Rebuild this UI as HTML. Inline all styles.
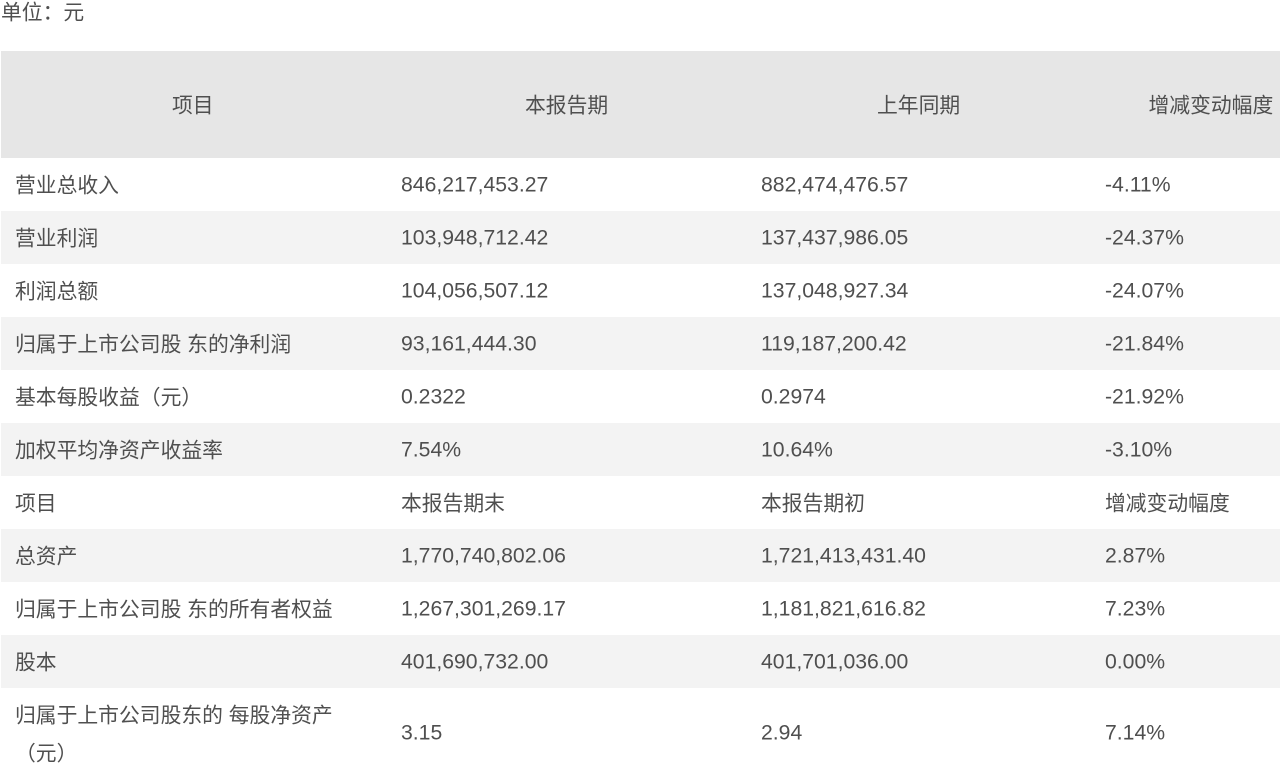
<!DOCTYPE html>
<html lang="zh-CN">
<head>
<meta charset="utf-8">
<title>单位:元</title>
<style>
html,body{margin:0;padding:0;background:#fff;width:1280px;height:775px;overflow:hidden}
body{position:relative;font-family:"Liberation Sans","Noto Sans CJK SC",sans-serif;font-size:20.8px;color:#4f4f4f}
.b{position:absolute;left:1px;width:1279px}
.t{position:absolute;white-space:nowrap;line-height:28px;transform:translateY(-12.5px);filter:blur(.25px)}
.n{font-size:21.2px;transform:translateY(-13.5px)}
</style>
</head>
<body>
<div class="b" style="top:51px;height:107px;background:#e6e6e6"></div>
<div class="b" style="top:211px;height:53px;background:#f3f3f3"></div>
<div class="b" style="top:317px;height:53px;background:#f3f3f3"></div>
<div class="b" style="top:423px;height:53px;background:#f3f3f3"></div>
<div class="b" style="top:529px;height:53px;background:#f3f3f3"></div>
<div class="b" style="top:635px;height:53px;background:#f3f3f3"></div>

<div class="t" style="left:1px;top:12px">单位&#xFF1A;元</div>

<div class="t" style="left:172px;top:105px">项目</div>
<div class="t" style="left:525px;top:105px">本报告期</div>
<div class="t" style="left:877px;top:105px">上年同期</div>
<div class="t" style="left:1148.5px;top:105px">增减变动幅度</div>

<div class="t" style="left:15px;top:185px">营业总收入</div>
<div class="t n" style="left:401px;top:185px">846,217,453.27</div>
<div class="t n" style="left:761px;top:185px">882,474,476.57</div>
<div class="t n" style="left:1105px;top:185px">-4.11%</div>

<div class="t" style="left:15px;top:238px">营业利润</div>
<div class="t n" style="left:401px;top:238px">103,948,712.42</div>
<div class="t n" style="left:761px;top:238px">137,437,986.05</div>
<div class="t n" style="left:1105px;top:238px">-24.37%</div>

<div class="t" style="left:15px;top:291px">利润总额</div>
<div class="t n" style="left:401px;top:291px">104,056,507.12</div>
<div class="t n" style="left:761px;top:291px">137,048,927.34</div>
<div class="t n" style="left:1105px;top:291px">-24.07%</div>

<div class="t" style="left:15px;top:344px">归属于上市公司股 东的净利润</div>
<div class="t n" style="left:401px;top:344px">93,161,444.30</div>
<div class="t n" style="left:761px;top:344px">119,187,200.42</div>
<div class="t n" style="left:1105px;top:344px">-21.84%</div>

<div class="t" style="left:15px;top:397px">基本每股收益&#xFF08;元&#xFF09;</div>
<div class="t n" style="left:401px;top:397px">0.2322</div>
<div class="t n" style="left:761px;top:397px">0.2974</div>
<div class="t n" style="left:1105px;top:397px">-21.92%</div>

<div class="t" style="left:15px;top:450px">加权平均净资产收益率</div>
<div class="t n" style="left:401px;top:450px">7.54%</div>
<div class="t n" style="left:761px;top:450px">10.64%</div>
<div class="t n" style="left:1105px;top:450px">-3.10%</div>

<div class="t" style="left:15px;top:503px">项目</div>
<div class="t" style="left:401px;top:503px">本报告期末</div>
<div class="t" style="left:761px;top:503px">本报告期初</div>
<div class="t" style="left:1105px;top:503px">增减变动幅度</div>

<div class="t" style="left:15px;top:556px">总资产</div>
<div class="t n" style="left:401px;top:556px">1,770,740,802.06</div>
<div class="t n" style="left:761px;top:556px">1,721,413,431.40</div>
<div class="t n" style="left:1105px;top:556px">2.87%</div>

<div class="t" style="left:15px;top:609px">归属于上市公司股 东的所有者权益</div>
<div class="t n" style="left:401px;top:609px">1,267,301,269.17</div>
<div class="t n" style="left:761px;top:609px">1,181,821,616.82</div>
<div class="t n" style="left:1105px;top:609px">7.23%</div>

<div class="t" style="left:15px;top:662px">股本</div>
<div class="t n" style="left:401px;top:662px">401,690,732.00</div>
<div class="t n" style="left:761px;top:662px">401,701,036.00</div>
<div class="t n" style="left:1105px;top:662px">0.00%</div>

<div class="t" style="left:15px;top:715px">归属于上市公司股东的 每股净资产</div>
<div class="t" style="left:15px;top:753px">&#xFF08;元&#xFF09;</div>
<div class="t n" style="left:401px;top:733px">3.15</div>
<div class="t n" style="left:761px;top:733px">2.94</div>
<div class="t n" style="left:1105px;top:733px">7.14%</div>
</body>
</html>
